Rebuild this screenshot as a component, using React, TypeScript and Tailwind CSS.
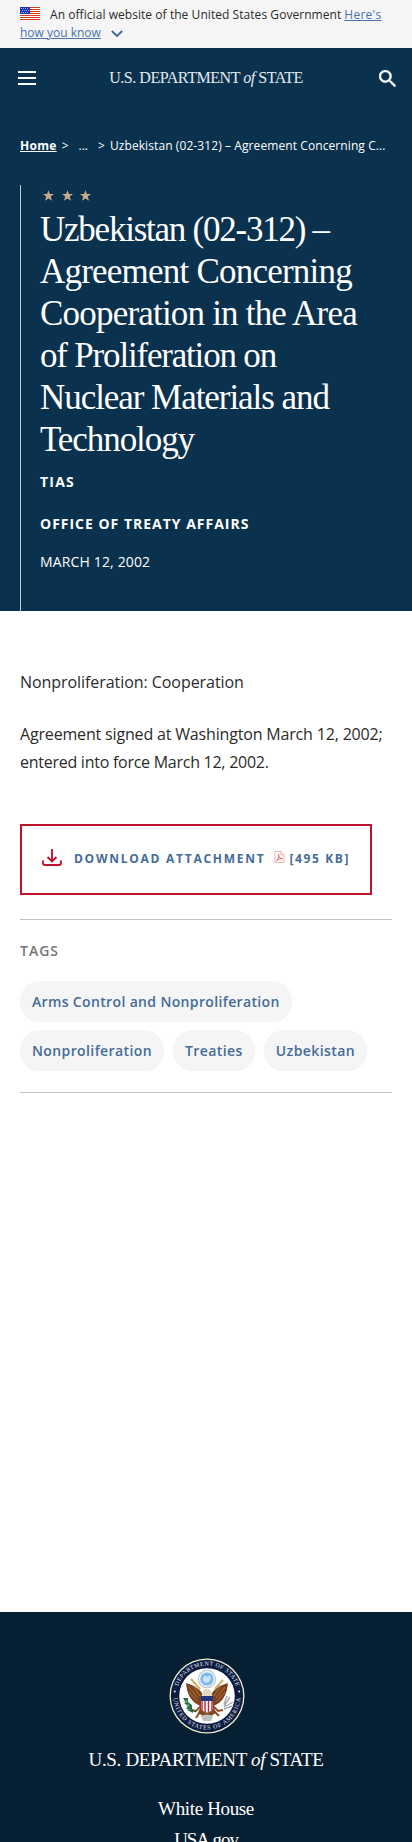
const titleLines = [
  { text: 'Uzbekistan (02-312) –', cls: 'tracking-[-1.24px]' },
  { text: 'Agreement Concerning', cls: 'tracking-[-0.78px]' },
  { text: 'Cooperation in the Area', cls: 'tracking-[-0.8px]' },
  { text: 'of Proliferation on', cls: 'tracking-[-1.19px]' },
  { text: 'Nuclear Materials and', cls: 'tracking-[-1.05px]' },
  { text: 'Technology', cls: 'tracking-[-1.07px]' },
];

function Flag() {
  return (
    <svg width="20" height="13" viewBox="0 0 20 13" className="mr-[10px] -mt-[3px] shrink-0">
      <rect width="20" height="13" fill="#fff" />
      {[0, 2, 4, 6, 8, 10, 12].map((y) => (
        <rect key={y} y={y} width="20" height="1" fill="#db3e1f" />
      ))}
      <rect width="10" height="7" fill="#1e33b1" />
      {[1, 3, 5].map((y) =>
        [1, 3, 5, 7].map((x) => (
          <rect key={`${x}-${y}`} x={x + (y === 3 ? 1 : 0)} y={y} width="1" height="1" fill="#a5aee0" />
        )),
      )}
    </svg>
  );
}

function Seal() {
  return (
    <svg width="76" height="76" viewBox="0 0 76 76" className="ml-[2px] shrink-0">
      <defs>
        <path id="seal-top" d="M7.500 38a30.500 30.500 0 0 1 61 0" />
        <path id="seal-bottom" d="M4.500 38a33.500 33.500 0 0 0 67 0" />
      </defs>
      <circle cx="38" cy="38" r="37.500" fill="#f2f0cf" />
      <circle cx="38" cy="38" r="36.200" fill="#0b1c40" />
      <circle cx="38" cy="38" r="27.800" fill="#fff" />
      <g fill="#e6e8ee" fontFamily="Liberation Serif, serif" fontSize="6">
        <text>
          <textPath href="#seal-top" startOffset="10" textLength="76">DEPARTMENT OF STATE</textPath>
        </text>
        <text>
          <textPath href="#seal-bottom" startOffset="2" textLength="101">UNITED STATES OF AMERICA</textPath>
        </text>
      </g>
      <circle cx="5.800" cy="33.500" r="0.900" fill="#fff" />
      <circle cx="70.200" cy="33.500" r="0.900" fill="#fff" />
      <path d="M22 21l9 10M54 22l-8 9" stroke="#cdb069" strokeWidth="2" />
      <path d="M17 25c1 9 3 15 9 20l7 4 1-12c-2-5-9-10-17-12z" fill="#7b431f" />
      <path d="M59 25c-1 9-3 15-9 20l-7 4-1-12c2-5 9-10 17-12z" fill="#7b431f" />
      <path d="m20 29 9 11M20 34l8 9M25 29l6 9M56 29l-9 11M56 34l-8 9M51 29l-6 9" stroke="#b8763a" strokeWidth="0.900" fill="none" />
      <circle cx="38" cy="21" r="9.200" fill="#b9c0c8" />
      <circle cx="38" cy="21" r="8.200" fill="#e8f3fb" />
      <circle cx="38" cy="21" r="6.600" fill="#7db9ec" />
      <path d="m34 20 2-3 2 2 3-2 1 4-2 3-3 1-3-2z" fill="#c9e3f8" />
      <path d="M33 47l-6 6-5-1M43 47l6 6 5-1M32 52l-5 8M44 52l6 6" stroke="#8d4f23" strokeWidth="2" fill="none" />
      <path d="M32 48h12l3 7-5 3h-8l-5-3z" fill="#7d4824" />
      <path d="M34 33c1-3 6-3 8 0l2 7H32z" fill="#e5d9c5" />
      <path d="M32 38h12v13q-6 7-12 0z" fill="#fff" />
      <path d="M33 42v10M36 42v12M39.500 42v12M43 42v10" stroke="#c32d43" strokeWidth="1.500" />
      <path d="M32 38h12v5H32z" fill="#24377e" />
      <path d="m14 40 4 4-3 2 5 1-3 4 6 1 0-5-4-3 0-4zM18 52l6 3 0-4z" fill="#2c7044" />
      <path d="M15 40c2 7 5 11 12 14" stroke="#24603a" fill="none" />
      <path d="m61 39-6 9M64 44l-9 5M58 38l-3 8M63 48l-8 3" stroke="#a6a9ad" strokeWidth="1.400" />
      <path d="M32 58q6-3 12 0l-2 5h-8z" fill="#bcc1c3" />
    </svg>
  );
}

function Wordmark({ className }: { className: string }) {
  return (
    <span className={`whitespace-nowrap font-['Liberation_Serif',serif] ${className}`}>
      U.S. DEPARTMENT <i>of</i> STATE
    </span>
  );
}

const tags = [
  { label: 'Arms Control and Nonproliferation', cls: 'tracking-[0.35px]' },
  { label: 'Nonproliferation', cls: 'tracking-[0.39px]' },
  { label: 'Treaties', cls: 'tracking-[0.42px]' },
  { label: 'Uzbekistan', cls: 'tracking-[0.42px]' },
];

export default function App() {
  return (
    <div className="flex h-[1842px] w-[412px] flex-col overflow-hidden bg-white font-['Open_Sans',sans-serif] text-[#2b2b2b]">
      <div className="h-12 shrink-0 bg-[#f5f5f5] px-5 pt-[6px] text-[12px] leading-[18px] whitespace-nowrap">
        <div className="flex items-center">
          <Flag />
          <span className="tracking-[0.055px]">An official website of the United States Government</span>
          <a className="ml-[3px] tracking-[0.25px] text-[#4773aa] underline">Here&apos;s</a>
        </div>
        <div className="flex items-center">
          <a className="text-[#4773aa] underline">how you know</a>
          <svg width="12" height="8" viewBox="0 0 12 8" className="mt-[2px] ml-[10px]" fill="none" stroke="#416895" strokeWidth="1.900">
            <path d="m.8 1 5.200 5L11.200 1" />
          </svg>
        </div>
      </div>

      <header className="h-[563px] shrink-0 bg-[#0a314d] text-white">
        <div className="flex h-[60px] items-center justify-between pr-4 pl-[18px]">
          <svg width="18" height="14" viewBox="0 0 18 14" fill="#fff">
            <path d="M0 0h18v2H0zM0 6h18v2H0zM0 12h18v2H0z" />
          </svg>
          <Wordmark className="mr-[3px] text-[16px] tracking-[-0.45px] text-[#e3ebf0]" />
          <svg width="17" height="17" viewBox="3 3 17.500 17.500" fill="#fff" stroke="#fff" strokeWidth="0.400">
            <path d="M15.500 14h-.79l-.28-.27A6.470 6.470 0 0 0 16 9.500 6.500 6.500 0 1 0 9.500 16c1.610 0 3.090-.59 4.230-1.570l.27.28v.79l5 4.990L20.490 19l-4.990-5zm-6 0C7.010 14 5 11.990 5 9.500S7.010 5 9.500 5 14 7.010 14 9.500 11.990 14 9.500 14z" />
          </svg>
        </div>
        <nav className="flex h-[75px] items-center pl-5 text-[12px] whitespace-nowrap">
          <a className="font-bold tracking-[0.3px] underline">Home</a>
          <span className="ml-[5px]">&gt;</span>
          <span className="ml-[10px]">...</span>
          <span className="ml-[10px]">&gt;</span>
          <span className="ml-[5px] tracking-[0.09px]">Uzbekistan (02-312) – Agreement Concerning C...</span>
        </nav>
        <div className="mt-[2px] ml-5 h-[426px] border-l border-[#bccdd0] pl-[19px]">
          <div className="flex gap-[7.5px] pt-[5px] pl-[3px]">
            {[0, 1, 2].map((n) => (
              <svg key={n} width="11" height="11" viewBox="0 0 20 19" fill="#c8a98a">
                <path d="m10 0 2.600 6.800H20l-5.900 4.700 2.200 7.500-6.300-4.200L3.700 19l2.200-7.500L0 6.800h7.400z" />
              </svg>
            ))}
          </div>
          <h1 className="mt-[8px] font-['Liberation_Serif',serif] text-[35px] leading-[42px]">
            {titleLines.map((l) => (
              <span key={l.text} className={`block whitespace-nowrap ${l.cls}`}>
                {l.text}
              </span>
            ))}
          </h1>
          <div className="mt-[11px] text-[14px] leading-[20px]">
            <p className="font-bold tracking-[1.2px]">TIAS</p>
            <p className="mt-[22px] font-bold tracking-[0.99px]">OFFICE OF TREATY AFFAIRS</p>
            <p className="mt-[18px] tracking-[0.15px]">MARCH 12, 2002</p>
          </div>
        </div>
      </header>

      <main className="px-5 pt-[57px]">
        <p className="text-[16px] leading-[28px] tracking-[-0.06px]">Nonproliferation: Cooperation</p>
        <p className="mt-6 text-[16px] leading-[28px] whitespace-nowrap">
          <span className="tracking-[-0.17px]">Agreement signed at Washington March 12, 2002;</span>
          <br />
          <span className="tracking-[-0.26px]">entered into force March 12, 2002.</span>
        </p>
        <a className="mt-12 flex h-[71px] w-[352px] items-center border-2 border-[#c0142c] pb-[2px] pl-5 text-[12px] font-bold whitespace-nowrap text-[#446c97]">
          <svg width="20" height="18" viewBox="0 0 20 18" className="-mt-[2px]" fill="none" stroke="#c0142c" strokeWidth="1.900">
            <path d="M10 0v12M5.500 8l4.500 4.500L14.500 8M1 11.500v2.500q0 2 2 2h14q2 0 2-2v-2.500" />
          </svg>
          <span className="ml-[12px] tracking-[1.74px]">DOWNLOAD ATTACHMENT</span>
          <svg width="11" height="12" viewBox="0 0 11 13" className="-mt-[3px] mr-[5px] ml-[8px]" fill="none" stroke="#e9a3a3" strokeWidth="0.900">
            <path d="M.5.5H7l3.500 3.500v8.500H.5zM7 .5V4h3.500" />
            <path d="M2 10.500c2-1 3.500-5 2.500-7-1 1.500 2 5.500 4.500 5-2-1-5 .5-7 2z" stroke="#d65a5a" />
          </svg>
          <span className="tracking-[1.6px]">[495 KB]</span>
        </a>
        <section className="mt-[24px] h-[174px] border-y border-[#c2c2c2] pt-[21px]">
          <h2 className="text-[14px] leading-[20px] font-semibold tracking-[1px] text-[#757575]">TAGS</h2>
          <div className="mt-[20px] flex flex-wrap gap-x-[9px] gap-y-[9px]">
            {tags.map((t) => (
              <a
                key={t.label}
                className={`flex h-10 items-center rounded-[20px] bg-[#f5f5f5] px-3 text-[14px] font-semibold whitespace-nowrap text-[#446c97] shadow-[0_1px_1px_#0000000f] ${t.cls}`}
              >
                {t.label}
              </a>
            ))}
          </div>
        </section>
      </main>

      <footer className="mt-auto flex h-[230px] shrink-0 flex-col items-center overflow-hidden bg-[#071f33] pt-[46px] text-white">
        <Seal />
        <Wordmark className="mt-[14px] text-[19px] leading-[24px] tracking-[-0.33px]" />
        <div className="mt-[21px] flex flex-col items-center font-['Liberation_Serif',serif] text-[19px] leading-[31px]">
          <a className="tracking-[-0.35px]">White House</a>
          <a className="tracking-[-1.1px]">USA.gov</a>
        </div>
      </footer>
    </div>
  );
}
